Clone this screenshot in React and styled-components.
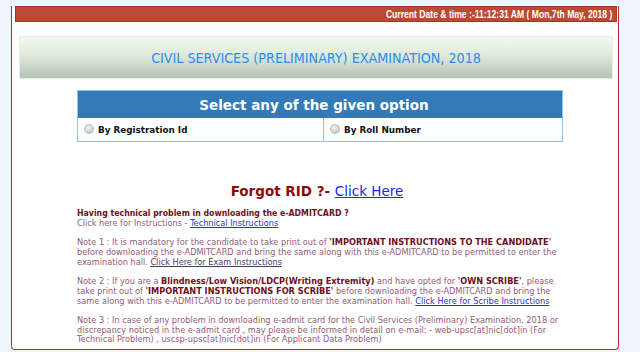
import React from "react";
import styled, { createGlobalStyle } from "styled-components";

const GlobalStyle = createGlobalStyle`
  html, body {
    margin: 0;
    padding: 0;
    background: #eef5fc;
    overflow: hidden;
  }
  body {
    font-family: "DejaVu Sans Condensed", "DejaVu Sans", sans-serif;
  }
`;

const Page = styled.div`
  width: 640px;
  box-sizing: border-box;
  padding: 6px 21px 0 11px;
`;

const Frame = styled.div`
  width: 608px;
  box-sizing: border-box;
  background: #ffffff;
  border: 1.5px solid #c0262b;
  border-top: none;
  border-radius: 0 0 4px 4px;
  padding: 0 1px 4px 3px;
`;

const TimeBar = styled.div`
  width: 100%;
  height: 16px;
  background: #b94a33;
  border: 1px solid #a63420;
  box-sizing: border-box;
  display: flex;
  align-items: center;
  justify-content: flex-end;
  padding-right: 4px;
  overflow: hidden;
`;

const TimeText = styled.span`
  display: inline-block;
  white-space: nowrap;
  color: #ffffff;
  font-family: "Liberation Sans", Arial, sans-serif;
  font-weight: bold;
  font-size: 10px;
  transform: scaleX(0.86);
  transform-origin: right center;
`;

const TitleBand = styled.div`
  margin: 14px 4px 0 4px;
  height: 43px;
  background: linear-gradient(to bottom, #f3fbf0 0%, #dbe6d8 50%, #b3c3b4 100%);
  border: 1px solid #e6ece6;
  box-sizing: border-box;
  display: flex;
  align-items: center;
  justify-content: center;
  color: #2a8ef0;
  font-size: 14.2px;
`;

const Content = styled.div`
  padding-left: 62px;
  display: flex;
  flex-direction: column;
  align-items: flex-start;
`;

const OptionTable = styled.div`
  margin-top: 11px;
  width: 486px;
  border: 1px solid #8ec3ee;
  box-sizing: border-box;
`;

const OptionHead = styled.div`
  height: 27px;
  padding-right: 12px;
  background: #337ab7;
  color: #ffffff;
  display: flex;
  align-items: center;
  justify-content: center;
  font-family: "DejaVu Sans", sans-serif;
  font-weight: bold;
  font-size: 13.5px;
`;

const OptionRow = styled.div`
  display: grid;
  grid-template-columns: 245px 1fr;
  height: 23px;
`;

const OptionCell = styled.label`
  display: flex;
  align-items: center;
  gap: 4px;
  padding-left: 6px;
  border-left: ${(p) => (p.$divider ? "1px solid #8ec3ee" : "none")};
  font-family: "DejaVu Sans", sans-serif;
  font-weight: bold;
  font-size: 8.8px;
  color: #111111;
`;

const Radio = styled.span`
  width: 8px;
  height: 8px;
  border-radius: 50%;
  background: radial-gradient(circle at 40% 35%, #f4f4f4 0%, #d2d2d2 60%, #b4b4b4 100%);
  border: 0.5px solid #b9b9b9;
  margin-top: -2px;
`;

const Forgot = styled.div`
  width: 480px;
  margin-top: 40px;
  text-align: center;
  font-family: "DejaVu Sans", sans-serif;
  font-size: 13.5px;
  line-height: 18px;
  font-weight: bold;
  color: #8b0a0a;
`;

const BigLink = styled.a`
  font-weight: normal;
  color: #2222ee;
  text-decoration: underline;
`;

const Notes = styled.div`
  width: 486px;
  margin-top: 9px;
  font-size: 9.1px;
  line-height: 9.8px;
  color: #945a7a;
`;

const Para = styled.p`
  margin: 0 0 ${(p) => (p.$last ? 0 : 9.5)}px 0;
`;

const Heading = styled.span`
  font-weight: bold;
  font-size: 8.7px;
  color: #6e1020;
`;

const Strong = styled.span`
  font-weight: bold;
  color: #6e1020;
`;

const Link = styled.a`
  color: ${(p) => (p.$dark ? "#4a3a6a" : "#2f2fdc")};
  text-decoration: underline;
`;

const App = () => {
  return (
    <>
      <GlobalStyle />
      <Page>
        <Frame>
          <TimeBar>
            <TimeText>Current Date &amp; time :-11:12:31 AM ( Mon,7th May, 2018 )</TimeText>
          </TimeBar>
          <TitleBand>CIVIL SERVICES (PRELIMINARY) EXAMINATION, 2018</TitleBand>
          <Content>
            <OptionTable>
              <OptionHead>Select any of the given option</OptionHead>
              <OptionRow>
                <OptionCell>
                  <Radio />
                  By Registration Id
                </OptionCell>
                <OptionCell $divider>
                  <Radio />
                  By Roll Number
                </OptionCell>
              </OptionRow>
            </OptionTable>
            <Forgot>
              Forgot RID ?- <BigLink>Click Here</BigLink>
            </Forgot>
            <Notes>
              <Para>
                <Heading>Having technical problem in downloading the e-ADMITCARD ?</Heading>
                <br />
                Click here for Instructions - <Link>Technical Instructions</Link>
              </Para>
              <Para>
                Note 1 : It is mandatory for the candidate to take print out of{" "}
                <Strong>'IMPORTANT INSTRUCTIONS TO THE CANDIDATE'</Strong> before downloading the
                e-ADMITCARD and bring the same along with this e-ADMITCARD to be permitted to enter the
                examination hall. <Link $dark>Click Here for Exam Instructions</Link>
              </Para>
              <Para>
                Note 2 : If you are a <Strong>Blindness/Low Vision/LDCP(Writing Extremity)</Strong> and
                have opted for <Strong>'OWN SCRIBE'</Strong>, please take print out of{" "}
                <Strong>'IMPORTANT INSTRUCTIONS FOR SCRIBE'</Strong> before downloading the e-ADMITCARD
                and bring the same along with this e-ADMITCARD to be permitted to enter the examination
                hall. <Link>Click Here for Scribe Instructions</Link>
              </Para>
              <Para $last>
                Note 3 : In case of any problem in downloading e-admit card for the Civil Services
                (Preliminary) Examination, 2018 or discrepancy noticed in the e-admit card , may please
                be informed in detail on e-mail: - web-upsc[at]nic[dot]in (For Technical Problem) ,
                uscsp-upsc[at]nic[dot]in (For Applicant Data Problem)
              </Para>
            </Notes>
          </Content>
        </Frame>
      </Page>
    </>
  );
};

export default App;
